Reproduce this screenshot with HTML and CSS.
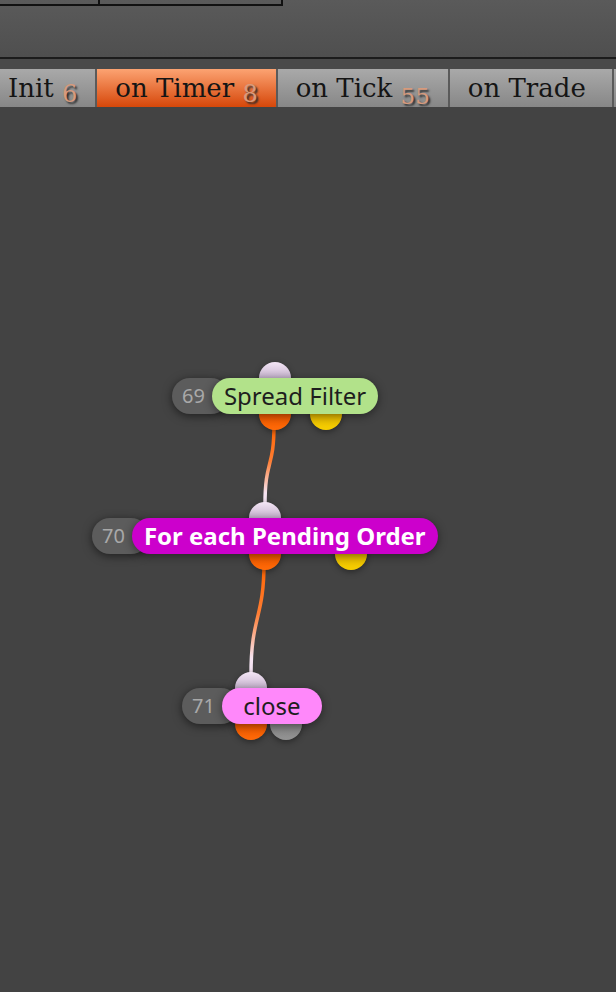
FILE: index.html
```html
<!DOCTYPE html>
<html lang="en">
<head>
    <meta charset="UTF-8">
    <meta name="viewport" content="width=device-width, initial-scale=1.0">
    <title>Strategy Editor</title>
    <link rel="stylesheet" href="styles.css">
</head>
<body>
    <div class="toolbar">
        <div class="toolbar-grid">
            <div class="cell"></div>
            <div class="cell"></div>
        </div>
    </div>

    <div class="tab-strip">
        <div class="tabs">
            <div class="tab first">Init <span class="count">6</span></div>
            <div class="tab active">on Timer <span class="count">8</span></div>
            <div class="tab">on Tick <span class="count low">55</span></div>
            <div class="tab">on Trade <span class="count empty"></span></div>
            <div class="tab"></div>
        </div>
    </div>

    <div class="canvas">
        <!-- links between ports -->
        <svg class="wires" width="616" height="885">
            <defs>
                <linearGradient id="wire-grad" x1="0" y1="0" x2="0" y2="1">
                    <stop offset="0" stop-color="#ff6400"/>
                    <stop offset="0.45" stop-color="#ff7d33"/>
                    <stop offset="0.85" stop-color="#f6e4f2"/>
                    <stop offset="1" stop-color="#f0e0f0"/>
                </linearGradient>
            </defs>
            <path d="M274 318 C274 362, 265 352, 265 398" stroke="url(#wire-grad)" stroke-width="3.5" fill="none"/>
            <path d="M264 456 C264 512, 251 508, 251 568" stroke="url(#wire-grad)" stroke-width="3.5" fill="none"/>
        </svg>

        <div class="node" style="left: 172px; top: 271px;">
            <span class="port in" style="left: 87px;"></span>
            <span class="port out" style="left: 87px;"></span>
            <span class="port alt" style="left: 138px;"></span>
            <span class="node-id">69</span>
            <span class="node-label filter">Spread Filter</span>
        </div>

        <div class="node" style="left: 92px; top: 411px;">
            <span class="port in" style="left: 157px;"></span>
            <span class="port out" style="left: 157px;"></span>
            <span class="port alt" style="left: 243px;"></span>
            <span class="node-id">70</span>
            <span class="node-label loop">For each Pending Order</span>
        </div>

        <div class="node" style="left: 182px; top: 581px;">
            <span class="port in" style="left: 53px;"></span>
            <span class="port out" style="left: 53px;"></span>
            <span class="port off" style="left: 88px;"></span>
            <span class="node-id">71</span>
            <span class="node-label action">close</span>
        </div>
    </div>
</body>
</html>
```

FILE: styles.css
```css
body {
    margin: 0;
    padding: 0;
    width: 616px;
    height: 992px;
    overflow: hidden;
    background-color: #444444;
    display: flex;
    flex-direction: column;
    font-family: "Noto Sans", "Open Sans", sans-serif;
}

.toolbar {
    height: 57px;
    background: linear-gradient(#5a5a5a, #4f4f4f);
    border-bottom: 2px solid #1c1c1c;
}

.toolbar-grid {
    display: grid;
    grid-template-columns: 100px 181px;
    height: 4px;
    border-right: 2px solid #111;
    border-bottom: 2px solid #111;
    width: 281px;
}

.toolbar-grid .cell:first-child {
    border-right: 2px solid #111;
}

.tab-strip {
    position: relative;
    z-index: 1;
    background-color: #4a4a4a;
    padding-top: 10px;
    overflow-x: clip;
    overflow-y: visible;
}

.tabs {
    display: flex;
    gap: 2px;
    height: 38px;
    background-color: #5a5a5a;
    margin-left: -10px;
}

.tab {
    flex-shrink: 0;
    padding: 0 18px;
    min-width: 20px;
    line-height: 38px;
    font-family: "DejaVu Serif", "Liberation Serif", serif;
    font-size: 26px;
    color: #151515;
    background: linear-gradient(#a9a9a9, #878787);
    white-space: nowrap;
}

.tab.active {
    background: linear-gradient(#fca372, #d6470a);
}

.count {
    font-size: 24px;
    color: #d79a7c;
    vertical-align: -5px;
    text-shadow: 2px 2px 2px #2a2a2a;
}

.count.low {
    vertical-align: -7px;
    font-size: 23px;
}

.count.empty {
    display: inline-block;
    width: 0;
}

.canvas {
    flex: 1;
    position: relative;
    background-color: #434343;
}

.wires {
    position: absolute;
    left: 0;
    top: 0;
}

.node {
    position: absolute;
    display: flex;
    height: 36px;
}

.node-id {
    position: relative;
    padding: 0 24px 0 10px;
    margin-right: -17px;
    border-radius: 18px;
    background-color: #5c5c5c;
    color: #a9a9a9;
    font-size: 20px;
    line-height: 36px;
    box-shadow: 0 2px 10px rgba(0, 0, 0, 0.55);
}

.node-label {
    position: relative;
    min-width: 76px;
    padding: 0 12px;
    border-radius: 18px;
    font-size: 24px;
    line-height: 35px;
    text-align: center;
    color: #1e1e1e;
    white-space: nowrap;
    box-shadow: 0 2px 10px rgba(0, 0, 0, 0.45);
}

.node-label.filter {
    background-color: #b2e28a;
}

.node-label.loop {
    background-color: #cc00cc;
    color: #ffffff;
    font-weight: bold;
}

.node-label.action {
    background-color: #ff88fa;
}

.port {
    position: absolute;
    width: 32px;
    height: 32px;
    border-radius: 50%;
    box-shadow: 0 2px 6px rgba(0, 0, 0, 0.4);
}

.port.in {
    top: -16px;
    background: linear-gradient(#f4e6f6, #cbb8d2 45%, #8c7c94);
}

.port.out {
    top: 20px;
    background: linear-gradient(#b84400, #f25a00 55%, #ff6a08);
}

.port.alt {
    top: 20px;
    background: linear-gradient(#b08600, #e8bb00 55%, #f7cf00);
}

.port.off {
    top: 20px;
    background: linear-gradient(#5e5e5e, #858585 55%, #939393);
}
```
